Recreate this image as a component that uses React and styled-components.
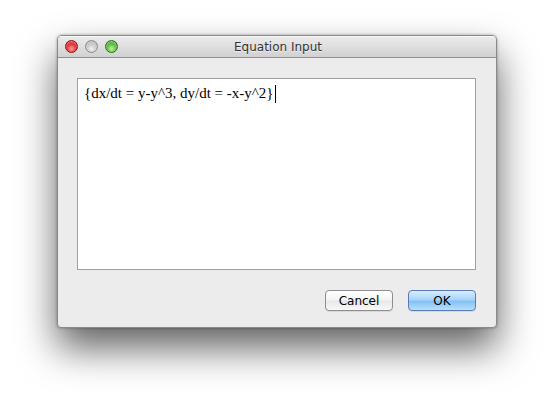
import React from 'react'
import styled, { createGlobalStyle } from 'styled-components'

const GlobalStyle = createGlobalStyle`
  html, body {
    margin: 0;
    padding: 0;
    background: #fff;
  }
`

function TrafficLights() {
  return (
    <Lights>
      <Light $c1="#ff9a9a" $c2="#e0262a" $c3="#8f0f12" />
      <Light $c1="#f2f2f2" $c2="#c4c4c4" $c3="#8a8a8a" />
      <Light $c1="#bff3a8" $c2="#4fb82e" $c3="#2a7317" />
    </Lights>
  )
}

function App() {
  return (
    <Page>
      <GlobalStyle />
      <Window>
        <TitleBar>
          <TrafficLights />
          <Title>Equation Input</Title>
        </TitleBar>
        <Body>
          <InputBox>
            <InputText>{'{dx/dt = y-y^3, dy/dt = -x-y^2}'}</InputText>
            <Caret />
          </InputBox>
          <Buttons>
            <Button>Cancel</Button>
            <Button $primary>OK</Button>
          </Buttons>
        </Body>
      </Window>
    </Page>
  )
}

const Page = styled.div`
  width: 554px;
  height: 408px;
  padding: 35px 0 0 57px;
  box-sizing: border-box;
  background: #fff;
`
const Window = styled.div`
  width: 440px;
  height: 293px;
  box-sizing: border-box;
  display: flex;
  flex-direction: column;
  background: #ececec;
  border: 1px solid #8a8a8a;
  border-radius: 5px 5px 4px 4px;
  box-shadow: 0 20px 38px rgba(0, 0, 0, 0.62), 0 0 3px rgba(0, 0, 0, 0.35);
  overflow: hidden;
`
const TitleBar = styled.div`
  position: relative;
  height: 21px;
  flex: none;
  display: flex;
  align-items: center;
  justify-content: center;
  background: linear-gradient(#ececec, #d1d1d1);
  border-bottom: 1px solid #8f8f8f;
  box-shadow: inset 0 1px 0 #f8f8f8;
`
const Lights = styled.div`
  position: absolute;
  left: 7px;
  top: 4px;
  display: flex;
  gap: 7px;
`
const Light = styled.span`
  width: 13px;
  height: 13px;
  border-radius: 50%;
  box-sizing: border-box;
  border: 1px solid ${p => p.$c3};
  background: radial-gradient(circle at 50% 70%, ${p => p.$c1} 0%, ${p => p.$c2} 55%, ${p => p.$c3} 100%);
  box-shadow: inset 0 1px 2px rgba(255, 255, 255, 0.6);
`
const Title = styled.div`
  font-family: "DejaVu Sans", sans-serif;
  font-size: 12px;
  color: #333;
  text-shadow: 0 1px 0 rgba(255, 255, 255, 0.6);
  margin-left: 2px;
`
const Body = styled.div`
  flex: 1;
  display: flex;
  flex-direction: column;
  padding: 20px 20px 0 19px;
`
const InputBox = styled.div`
  height: 192px;
  box-sizing: border-box;
  background: #fff;
  border: 1px solid #a0a0a0;
  padding: 5px 6px;
  display: flex;
  align-items: flex-start;
`
const InputText = styled.span`
  font-family: "Liberation Serif", serif;
  font-size: 15px;
  line-height: 19px;
  color: #000;
  white-space: pre;
`
const Caret = styled.span`
  width: 1px;
  height: 18px;
  margin-top: 1px;
  margin-left: 1px;
  background: #000;
`
const Buttons = styled.div`
  display: flex;
  justify-content: flex-end;
  gap: 15px;
  margin-top: 20px;
`
const Button = styled.div`
  width: 68px;
  height: 21px;
  box-sizing: border-box;
  display: flex;
  align-items: center;
  justify-content: center;
  font-family: "DejaVu Sans", sans-serif;
  font-size: 12px;
  color: #000;
  border-radius: 4px;
  border: 1px solid ${p => (p.$primary ? '#5a7bb0' : '#8e8e8e')};
  background: ${p =>
    p.$primary
      ? 'linear-gradient(#d6ecfd 0%, #a9d5fb 45%, #86c1f5 55%, #b6e0fd 100%)'
      : 'linear-gradient(#ffffff 0%, #f4f4f4 45%, #e8e8e8 55%, #f8f8f8 100%)'};
  box-shadow: 0 1px 0 rgba(0, 0, 0, 0.08);
`

export default App
